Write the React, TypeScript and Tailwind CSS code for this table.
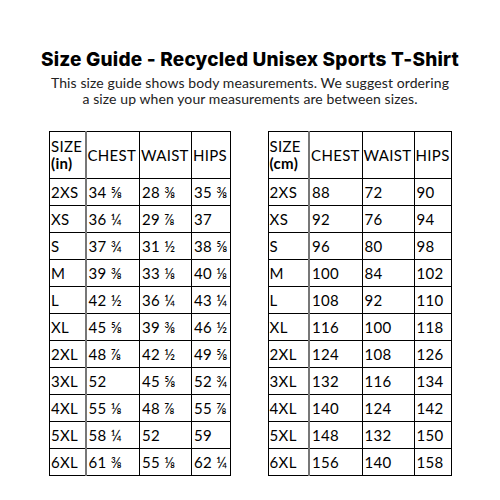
const inches = [
  ["2XS", "34 ⅝", "28 ⅜", "35 ⅜"],
  ["XS", "36 ¼", "29 ⅞", "37"],
  ["S", "37 ¾", "31 ½", "38 ⅝"],
  ["M", "39 ⅜", "33 ⅛", "40 ⅛"],
  ["L", "42 ½", "36 ¼", "43 ¼"],
  ["XL", "45 ⅝", "39 ⅜", "46 ½"],
  ["2XL", "48 ⅞", "42 ½", "49 ⅝"],
  ["3XL", "52", "45 ⅝", "52 ¾"],
  ["4XL", "55 ⅛", "48 ⅞", "55 ⅞"],
  ["5XL", "58 ¼", "52", "59"],
  ["6XL", "61 ⅜", "55 ⅛", "62 ¼"],
];

const cms = [
  ["2XS", "88", "72", "90"],
  ["XS", "92", "76", "94"],
  ["S", "96", "80", "98"],
  ["M", "100", "84", "102"],
  ["L", "108", "92", "110"],
  ["XL", "116", "100", "118"],
  ["2XL", "124", "108", "126"],
  ["3XL", "132", "116", "134"],
  ["4XL", "140", "124", "142"],
  ["5XL", "148", "132", "150"],
  ["6XL", "156", "140", "158"],
];

function SizeTable({ unit, rows, widths }: { unit: string; rows: string[][]; widths: string[] }) {
  return (
    <table className="border-collapse table-fixed text-[15px] tracking-[0.3px] leading-none text-black whitespace-nowrap">
      <colgroup>
        {widths.map((w, i) => (
          <col key={i} className={w} />
        ))}
      </colgroup>
      <thead>
        <tr className="h-[47px]">
          <th className="border border-black border-r-[#777] border-r-2 px-[1px] text-left font-normal leading-[17px]">
            SIZE
            <br />
            <span className="font-bold">({unit})</span>
          </th>
          <th className="border border-black px-[1px] text-left font-normal">CHEST</th>
          <th className="border border-black px-[1px] text-left font-normal">WAIST</th>
          <th className="border border-black px-[1px] text-left font-normal">HIPS</th>
        </tr>
      </thead>
      <tbody>
        {rows.map((r) => (
          <tr key={r[0]} className="h-[27px]">
            <td className="border border-black border-r-[#777] border-r-2 px-[1px]">{r[0]}</td>
            <td className="border border-black px-[2px]">{r[1]}</td>
            <td className="border border-black px-[2px]">{r[2]}</td>
            <td className="border border-black px-[2px]">{r[3]}</td>
          </tr>
        ))}
      </tbody>
    </table>
  );
}

export default function App() {
  return (
    <div className="w-[500px] h-[500px] bg-white flex flex-col items-center font-['Lato',sans-serif]">
      <h1 className="mt-[50px] text-[19px] font-extrabold leading-none text-black font-['Inter',sans-serif] tracking-[0.2px]">
        Size Guide - Recycled Unisex Sports T-Shirt
      </h1>
      <p className="mt-[6px] text-center text-[14px] tracking-[0.1px] leading-[16px] text-[#222]">
        This size guide shows body measurements. We suggest ordering
        <br />
        a size up when your measurements are between sizes.
      </p>
      <div className="mt-[24px] w-full flex pl-[49px] gap-[37px]">
        <SizeTable unit="in" rows={inches} widths={["w-[36px]", "w-[54px]", "w-[52px]", "w-[38px]"]} />
        <SizeTable unit="cm" rows={cms} widths={["w-[41px]", "w-[53px]", "w-[52px]", "w-[37px]"]} />
      </div>
    </div>
  );
}
